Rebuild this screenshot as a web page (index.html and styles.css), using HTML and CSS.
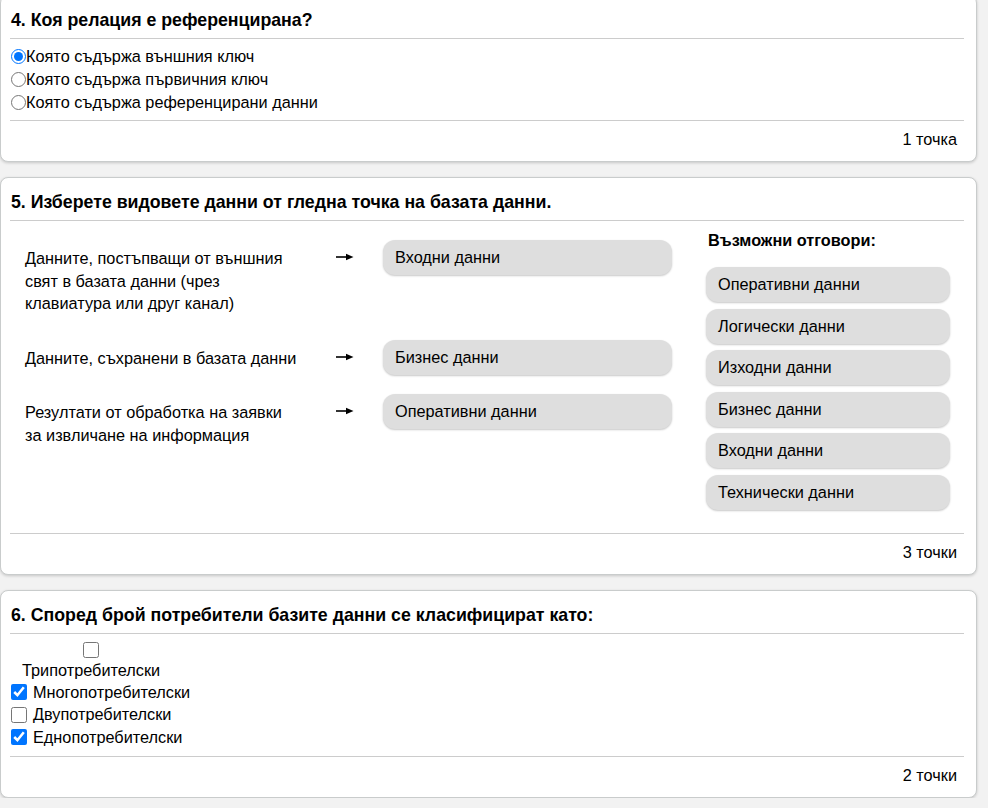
FILE: index.html
```html
<!DOCTYPE html>
<html lang="bg">
<head>
<meta charset="utf-8">
<title>Тест</title>
<link rel="stylesheet" href="styles.css">
</head>
<body>
<div class="page">
  <section class="card">
    <h3 class="q-title">4. Коя релация е референцирана?</h3>
    <div class="q-body radios">
      <label class="radio"><input type="radio" name="q4" checked>Която съдържа външния ключ</label>
      <label class="radio"><input type="radio" name="q4">Която съдържа първичния ключ</label>
      <label class="radio"><input type="radio" name="q4">Която съдържа референцирани данни</label>
    </div>
    <div class="q-foot">1 точка</div>
  </section>

  <section class="card">
    <h3 class="q-title">5. Изберете видовете данни от гледна точка на базата данни.</h3>
    <div class="match">
      <div class="pairs">
        <div class="pair">
          <div class="pair-label">Данните, постъпващи от външния свят в базата данни (чрез клавиатура или друг канал)</div>
          <div class="pair-arrow"><svg width="18" height="8" viewBox="0 0 18 8"><line x1="0" y1="4" x2="12" y2="4" stroke="#000" stroke-width="1.6"/><polygon points="10,0.8 17.5,4 10,7.2" fill="#000"/></svg></div>
          <div class="chip">Входни данни</div>
        </div>
        <div class="pair">
          <div class="pair-label">Данните, съхранени в базата данни</div>
          <div class="pair-arrow"><svg width="18" height="8" viewBox="0 0 18 8"><line x1="0" y1="4" x2="12" y2="4" stroke="#000" stroke-width="1.6"/><polygon points="10,0.8 17.5,4 10,7.2" fill="#000"/></svg></div>
          <div class="chip">Бизнес данни</div>
        </div>
        <div class="pair">
          <div class="pair-label">Резултати от обработка на заявки за извличане на информация</div>
          <div class="pair-arrow"><svg width="18" height="8" viewBox="0 0 18 8"><line x1="0" y1="4" x2="12" y2="4" stroke="#000" stroke-width="1.6"/><polygon points="10,0.8 17.5,4 10,7.2" fill="#000"/></svg></div>
          <div class="chip">Оперативни данни</div>
        </div>
      </div>
      <div class="answers">
        <div class="answers-title">Възможни отговори:</div>
        <div class="answer-list">
          <div class="chip">Оперативни данни</div>
          <div class="chip">Логически данни</div>
          <div class="chip">Изходни данни</div>
          <div class="chip">Бизнес данни</div>
          <div class="chip">Входни данни</div>
          <div class="chip">Технически данни</div>
        </div>
      </div>
    </div>
    <div class="q-foot">3 точки</div>
  </section>

  <section class="card">
    <h3 class="q-title">6. Според брой потребители базите данни се класифицират като:</h3>
    <div class="q-body checks">
      <label class="check check-stacked"><input type="checkbox"><span>Трипотребителски</span></label>
      <label class="check"><input type="checkbox" checked><span>Многопотребителски</span></label>
      <label class="check"><input type="checkbox"><span>Двупотребителски</span></label>
      <label class="check"><input type="checkbox" checked><span>Еднопотребителски</span></label>
    </div>
    <div class="q-foot">2 точки</div>
  </section>
</div>
</body>
</html>
```
FILE: styles.css
```css
html, body {
  margin: 0;
  padding: 0;
  background: #f2f2f2;
}
body {
  font-family: "Liberation Sans", Arial, sans-serif;
  font-size: 16.3px;
  color: #000;
}
.page {
  margin-top: -5px;
  padding-right: 11px;
  display: flex;
  flex-direction: column;
  gap: 15px;
}
.card {
  background: #fff;
  border: 1px solid #c9cccc;
  border-radius: 8px;
  box-shadow: 0 1px 3px rgba(0, 0, 0, 0.18);
  padding: 15px 12px 13px 9px;
}
.q-title {
  margin: 0;
  font-size: 17.75px;
  font-weight: bold;
  line-height: 19px;
  padding: 0 0 8px 1px;
  border-bottom: 1px solid #ccc;
}
.q-body {
  padding: 6px 0;
}
.radio {
  display: flex;
  align-items: center;
  height: 23px;
  line-height: 23px;
  padding-left: 1px;
}
.radio input {
  margin: 0;
  width: 15px;
  height: 15px;
}
.q-foot {
  border-top: 1px solid #ccc;
  padding: 9px 7px 0 0;
  line-height: 18px;
  text-align: right;
}

/* matching */
.match {
  display: flex;
  padding: 10px 0 23px;
}
.pairs {
  padding: 9px 0 0 15px;
  width: 647px;
  display: flex;
  flex-direction: column;
  gap: 18px;
}
.pair {
  display: grid;
  grid-template-columns: 296px 62px 289px;
  align-items: start;
}
.pair-label {
  padding: 7px 24px 7px 0;
  line-height: 22.5px;
}
.pair-arrow {
  padding: 13px 0 0 15px;
  height: 10px;
}
.pair-arrow svg {
  display: block;
}
.chip {
  background: #dedede;
  border-radius: 12px;
  box-shadow: 0 1px 2px rgba(0, 0, 0, 0.22);
  height: 35px;
  line-height: 35px;
  padding-left: 12px;
  box-sizing: border-box;
}
.answers {
  margin-left: 34px;
  width: 244px;
}
.answers-title {
  font-weight: bold;
  line-height: 18px;
  padding-left: 2px;
  margin-bottom: 18px;
}
.answer-list {
  display: flex;
  flex-direction: column;
  gap: 6.5px;
}

/* checkboxes */
.checks {
  padding: 6px 0 7px;
}
.check {
  display: flex;
  align-items: center;
  height: 22.5px;
  padding-left: 1px;
}
.check input {
  margin: 0 6px 0 0;
  width: 16px;
  height: 16px;
}
.check-stacked {
  flex-direction: column;
  align-items: center;
  height: auto;
  width: max-content;
  padding-left: 12px;
}
.check-stacked input {
  margin: 2px 0 1px;
}
.check-stacked span {
  line-height: 22.5px;
}
```
